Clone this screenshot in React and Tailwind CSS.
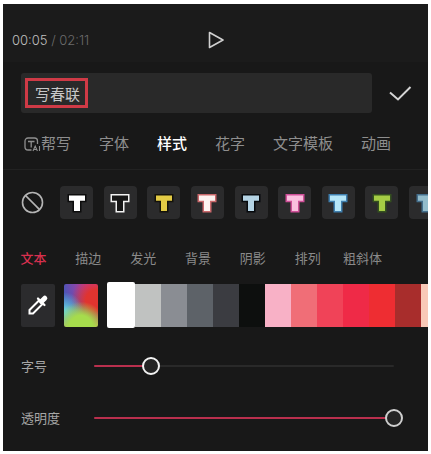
import { useState } from "react"

const mainTabs = ["帮写", "字体", "样式", "花字", "文字模板", "动画"]

const subTabs = ["文本", "描边", "发光", "背景", "阴影", "排列", "粗斜体"]

const textStyles = [
  { name: "白字黑边", fill: "#ffffff", stroke: "#0c0c0c" },
  { name: "黑字白边", fill: "#161616", stroke: "#f2f2f2" },
  { name: "黄字黑边", fill: "#e3cb45", stroke: "#14120a" },
  { name: "白字红边", fill: "#fdf3f0", stroke: "#c9686b" },
  { name: "浅蓝字黑边", fill: "#b4d3e4", stroke: "#06090c" },
  { name: "粉字红边", fill: "#fbbfdf", stroke: "#cf4f98" },
  { name: "浅蓝字蓝边", fill: "#b5e6f8", stroke: "#3f7fae" },
  { name: "绿字深绿边", fill: "#a5cc45", stroke: "#34501f" },
  { name: "青字蓝边", fill: "#93bccb", stroke: "#446f8c" },
]

const colors = [
  { name: "浅灰", bg: "bg-[#c0c2c1]" },
  { name: "灰", bg: "bg-[#8a8d93]" },
  { name: "深灰", bg: "bg-[#5d6268]" },
  { name: "炭灰", bg: "bg-[#3b3c41]" },
  { name: "黑", bg: "bg-[#0d0f0e]" },
  { name: "浅粉", bg: "bg-[#f8b1c6]" },
  { name: "珊瑚", bg: "bg-[#f06e77]" },
  { name: "玫红", bg: "bg-[#f04358]" },
  { name: "洋红", bg: "bg-[#ef2a47]" },
  { name: "红", bg: "bg-[#ee2d32]" },
  { name: "深红", bg: "bg-[#a82d2c]" },
  { name: "肤色", bg: "bg-[#f9c9b8]" },
]

function AiIcon() {
  return (
    <svg width="17" height="16" viewBox="0 0 17 16" fill="none" stroke="currentColor" strokeWidth="1.3" aria-hidden="true">
      <path d="M7.500 14H4A3 3 0 0 1 1 11V5A3 3 0 0 1 4 2H10.500A3 3 0 0 1 13.500 5V8" />
      <path d="M4 5.500H10.500M7.200 5.500V11.500" />
      <path d="M9 15L11.200 10L13.400 15M9.800 13.500H12.600M15.500 10V15" strokeWidth="1.1" />
    </svg>
  )
}

function TIcon({ fill, stroke }) {
  return (
    <svg width="24" height="24" viewBox="0 0 24 24" aria-hidden="true">
      <path
        d="M4 4.500H20V9.800H15V20H9V9.800H4Z"
        fill={fill}
        stroke={stroke}
        strokeWidth="3"
        paintOrder="stroke"
      />
    </svg>
  )
}

function EyedropperIcon() {
  return (
    <svg width="22" height="22" viewBox="0 0 22 22" fill="none" aria-hidden="true">
      <path d="M2.500 19.500V16L12 6.500L15.500 10L6 19.500Z" stroke="#fff" strokeWidth="2" />
      <path d="M11 4.500L17.500 11" stroke="#fff" strokeWidth="2.200" strokeLinecap="round" />
      <path d="M14.500 7.500L17.800 4.200" stroke="#fff" strokeWidth="5" strokeLinecap="round" />
    </svg>
  )
}

function Slider({ id, label, value, onChange, thumb }) {
  return (
    <div className="flex items-center h-[52px]">
      <label htmlFor={id} className="w-16 shrink-0 text-[13px] leading-5 text-[#a6a6a6]">{label}</label>
      <div className="relative flex-1 h-5">
        <div className="absolute inset-x-[9px] top-[9px] h-[2px] rounded-full bg-[#292929]">
          <div className="h-full rounded-full bg-[#b92f4d]" style={{ width: `${value}%` }} />
        </div>
        <input
          id={id}
          type="range"
          min="0"
          max="100"
          value={value}
          onChange={e => onChange(Number(e.target.value))}
          className={`
            relative block w-full h-5 appearance-none bg-transparent cursor-pointer
            [&::-webkit-slider-thumb]:appearance-none
            [&::-webkit-slider-thumb]:w-[18px]
            [&::-webkit-slider-thumb]:h-[18px]
            [&::-webkit-slider-thumb]:rounded-full
            [&::-webkit-slider-thumb]:border-2
            [&::-webkit-slider-thumb]:border-solid
            [&::-webkit-slider-thumb]:bg-[#242424]
            ${thumb}
          `}
        />
      </div>
    </div>
  )
}

export default function App() {
  const [text, setText] = useState("写春联")
  const [mainTab, setMainTab] = useState("样式")
  const [subTab, setSubTab] = useState("文本")
  const [size, setSize] = useState(19)
  const [opacity, setOpacity] = useState(100)

  return (
    <div className="bg-white px-[3px] pt-1 pb-[3px] font-['Inter','Noto_Sans_CJK_SC',sans-serif]">
      <div className="bg-[#181818] overflow-hidden">

        {/* Player bar */}
        <div className="grid grid-cols-3 items-center h-[58px] pt-[14px] px-[9px] bg-[#1b1b1b]">
          <p className="text-[13px] leading-5 font-light text-[#6c6c6c] whitespace-nowrap">
            <span className="text-[#c0c0c0]">00:05</span> / 02:11
          </p>
          <button type="button" aria-label="播放" className="justify-self-center">
            <svg width="20" height="20" viewBox="0 0 20 20" fill="none" stroke="#d0d0d0" strokeWidth="1.600" strokeLinejoin="round">
              <path d="M4.500 2.500L18 10L4.500 17.500Z" />
            </svg>
          </button>
        </div>

        {/* Text input */}
        <div className="flex items-center pt-[11px] pl-[18px] pr-4">
          <div className="flex-1 flex items-center h-10 px-1 rounded-[3px] bg-[#292929]">
            <input
              type="text"
              aria-label="文本内容"
              value={text}
              onChange={e => setText(e.target.value)}
              className="w-[63px] h-[30px] pl-[7px] border-[3px] border-[#cf3a46] text-[15px] leading-5 text-[#c8c8c8] outline-none"
            />
          </div>
          <button type="button" aria-label="完成" className="ml-4">
            <svg width="24" height="24" viewBox="0 0 24 24" fill="none" stroke="#d4d4d4" strokeWidth="2">
              <path d="M2 11.500L10 18.500L22.500 6" />
            </svg>
          </button>
        </div>

        {/* Main tabs */}
        <div className="flex items-center gap-7 h-[56px] mt-px pt-1 pl-[21px] border-b border-[#222] text-[15px] leading-6 whitespace-nowrap">
          {mainTabs.map((tab, i) => (
            <button
              key={tab}
              type="button"
              onClick={() => setMainTab(tab)}
              className={`flex items-center ${mainTab === tab ? "text-white font-medium" : "text-[#8e8e8e]"}`}
            >
              {i === 0 && <AiIcon />}
              {tab}
            </button>
          ))}
        </div>

        {/* Preset styles */}
        <div className="flex items-center pt-4 pl-[18px]">
          <button type="button" aria-label="无样式" className="shrink-0 mr-4">
            <svg width="23" height="23" viewBox="0 0 23 23" fill="none" stroke="#b5b5b5" strokeWidth="1.600">
              <circle cx="11.500" cy="11.500" r="10" />
              <path d="M4.400 4.400L18.600 18.600" />
            </svg>
          </button>
          <div className="flex-1 flex justify-between -mr-[14px]">
            {textStyles.map(s => (
              <button
                key={s.name}
                type="button"
                aria-label={s.name}
                className="shrink-0 flex items-center justify-center w-[33px] h-[33px] rounded-[4px] bg-[#2b2b2c]"
              >
                <TIcon fill={s.fill} stroke={s.stroke} />
              </button>
            ))}
          </div>
        </div>

        {/* Sub tabs */}
        <div className="flex mt-[27px] ml-[3px] mr-[38px] text-[13px] leading-6 whitespace-nowrap">
          {subTabs.map(tab => (
            <button
              key={tab}
              type="button"
              onClick={() => setSubTab(tab)}
              className={`flex-1 basis-0 ${subTab === tab ? "text-[#d9304f] font-medium" : "text-[#8a8a8a]"}`}
            >
              {tab}
            </button>
          ))}
        </div>

        {/* Colors */}
        <div className="flex items-center gap-[9px] mt-3 pl-[18px]">
          <button type="button" aria-label="取色器" className="shrink-0 flex items-center justify-center w-[34px] h-[43px] rounded-[2px] bg-[#2b2b2d]">
            <EyedropperIcon />
          </button>
          <button
            type="button"
            aria-label="调色盘"
            className="shrink-0 w-[34px] h-[43px] rounded-[2px] bg-[radial-gradient(circle_at_50%_100%,#a6dc4c_25%,transparent_55%),radial-gradient(circle_at_0%_65%,#66cfe0_5%,transparent_45%),radial-gradient(circle_at_95%_38%,#e0342f_25%,transparent_60%),radial-gradient(circle_at_85%_0%,#c0399c_10%,transparent_60%),linear-gradient(#4656b8_50%,#d8a04a)]"
          />
          <div className="flex items-center">
            <button type="button" aria-label="白" className="shrink-0 w-7 h-[46px] rounded-[2px] bg-white" />
            {colors.map(c => (
              <button key={c.name} type="button" aria-label={c.name} className={`shrink-0 w-[26px] h-[43px] ${c.bg}`} />
            ))}
          </div>
        </div>

        {/* Sliders */}
        <div className="pt-3 pb-[7px] pl-[18px] pr-[25px]">
          <Slider
            id="font-size"
            label="字号"
            value={size}
            onChange={setSize}
            thumb="[&::-webkit-slider-thumb]:border-[#f2f2f2]"
          />
          <Slider
            id="opacity"
            label="透明度"
            value={opacity}
            onChange={setOpacity}
            thumb="[&::-webkit-slider-thumb]:border-[#cfcfcf]"
          />
        </div>

      </div>
    </div>
  )
}
